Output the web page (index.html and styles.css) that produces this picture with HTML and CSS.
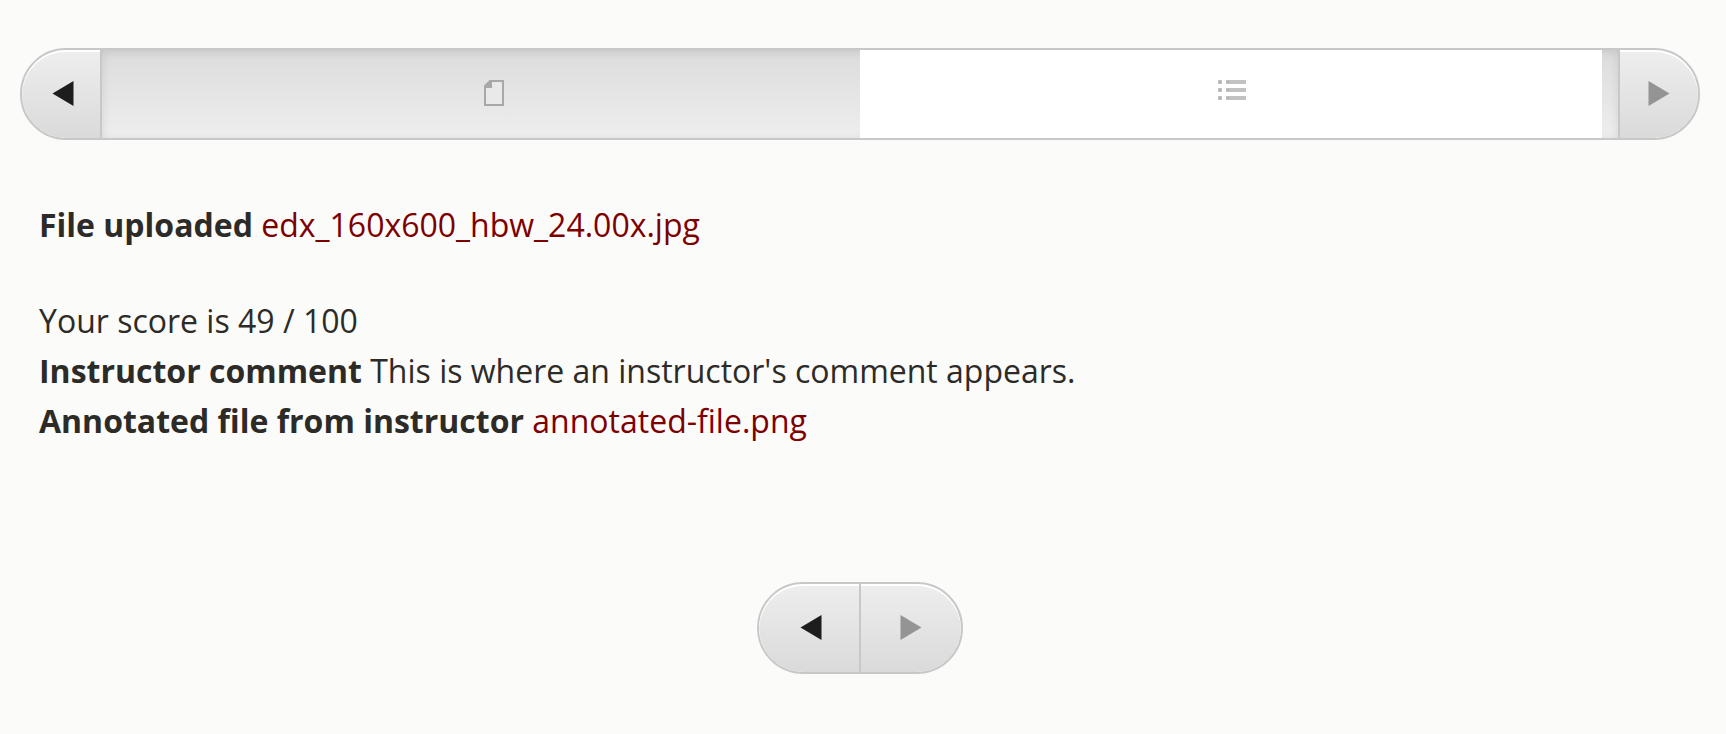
FILE: index.html
```html
<!DOCTYPE html>
<html lang="en">
<head>
<meta charset="utf-8">
<title>Graded assignment</title>
<link rel="stylesheet" href="styles.css">
</head>
<body>
<nav class="sequence-nav" aria-label="Sequence">
  <button class="nav-button nav-prev" type="button" aria-label="Previous">
    <svg class="arrow" viewBox="0 0 22 26" aria-hidden="true"><path d="M0.5 12.5 L21.5 0 V25 Z"/></svg>
  </button>
  <div class="sequence-tabs">
    <button class="tab" type="button" aria-label="Reading">
      <svg class="tab-icon" viewBox="0 0 38 28" aria-hidden="true">
        <path class="page" d="M20 1 H33 V25 H15 V6 Z"/>
        <path class="page-fold" d="M20 1 L22 2 V8 H15 V6 Z"/>
      </svg>
    </button>
    <button class="tab tab-active" type="button" aria-label="Problem" aria-current="true">
      <svg class="tab-icon" viewBox="0 0 38 28" aria-hidden="true">
        <path class="list-rows" d="M6 0h4v4H6z M14 0h20v4H14z M6 8h4v4H6z M14 8h20v4H14z M6 16h4v4H6z M14 16h20v4H14z"/>
        <path class="list-dots" d="M7 1h2v2H7z M15 1h2v2H15z M7 9h2v2H7z M15 9h2v2H15z M7 17h2v2H7z M15 17h2v2H15z"/>
      </svg>
    </button>
  </div>
  <button class="nav-button nav-next" type="button" aria-label="Next">
    <svg class="arrow" viewBox="0 0 22 26" aria-hidden="true"><path d="M21.5 12.5 L0.5 0 V25 Z"/></svg>
  </button>
</nav>

<main class="content">
  <p class="upload"><strong>File uploaded</strong> <a href="#">edx_160x600_hbw_24.00x.jpg</a></p>
  <p>Your score is 49 / 100</p>
  <p><strong>Instructor comment</strong> This is where an instructor's comment appears.</p>
  <p><strong>Annotated file from instructor</strong> <a href="#">annotated-file.png</a></p>
</main>

<nav class="bottom-nav" aria-label="Sequence bottom">
  <button class="nav-button nav-prev" type="button" aria-label="Previous">
    <svg class="arrow" viewBox="0 0 22 26" aria-hidden="true"><path d="M0.5 12.5 L21.5 0 V25 Z"/></svg>
  </button>
  <button class="nav-button nav-next" type="button" aria-label="Next">
    <svg class="arrow" viewBox="0 0 22 26" aria-hidden="true"><path d="M21.5 12.5 L0.5 0 V25 Z"/></svg>
  </button>
</nav>
</body>
</html>
```

FILE: styles.css
```css
* {
  box-sizing: border-box;
}

body {
  margin: 0;
  padding: 48px 26px 60px 20px;
  background: #fbfbf9;
  color: #2d2b27;
  font-family: "Open Sans", "Noto Sans", sans-serif;
  font-size: 32px;
  line-height: 50px;
}

.sequence-nav,
.bottom-nav {
  display: flex;
  border: 2px solid #c8c8c8;
  border-radius: 46px;
  overflow: hidden;
}

.nav-button {
  display: flex;
  align-items: center;
  justify-content: center;
  width: 80px;
  height: 88px;
  margin: 0;
  padding: 0;
  border: 0 solid #c8c8c8;
  background: linear-gradient(#eeeeee, #dadada);
  box-shadow: inset 0 2px 0 #ffffff;
  cursor: pointer;
}

.nav-prev {
  padding-left: 4px;
  border-right-width: 2px;
  border-radius: 44px 0 0 44px;
}

.nav-next {
  border-radius: 0 44px 44px 0;
}

.sequence-nav .nav-next {
  border-left-width: 2px;
}

.arrow {
  width: 22px;
  height: 26px;
  fill: #1d1d1d;
}

.nav-next .arrow {
  fill: #949494;
}

.sequence-tabs {
  display: flex;
  flex: 1;
  padding: 0 16px;
  background: linear-gradient(#dcdcdc, #eeeeee);
  box-shadow: inset 0 2px 10px rgba(0, 0, 0, 0.1);
}

.tab {
  display: flex;
  flex: 1;
  align-items: center;
  justify-content: center;
  margin: 0;
  padding: 0;
  border: 0;
  background: transparent;
  cursor: pointer;
}

.tab-active {
  background: #ffffff;
}

.tab-icon {
  width: 38px;
  height: 28px;
}

.page {
  fill: #e9e9e9;
  stroke: #a8a8a8;
  stroke-width: 2;
}

.page-fold {
  fill: #a8a8a8;
}

.list-rows {
  fill: #c2c2c2;
}

.list-dots {
  fill: #b2b2b2;
}

.content {
  padding: 60px 19px 136px;
}

.content p {
  margin: 0;
}

.content .upload {
  margin-bottom: 46px;
}

.content a {
  color: #7d0000;
  text-decoration: none;
}

.bottom-nav {
  width: fit-content;
  margin: 0 auto;
}

.bottom-nav .nav-prev {
  width: 102px;
}

.bottom-nav .nav-next {
  width: 100px;
}
```
